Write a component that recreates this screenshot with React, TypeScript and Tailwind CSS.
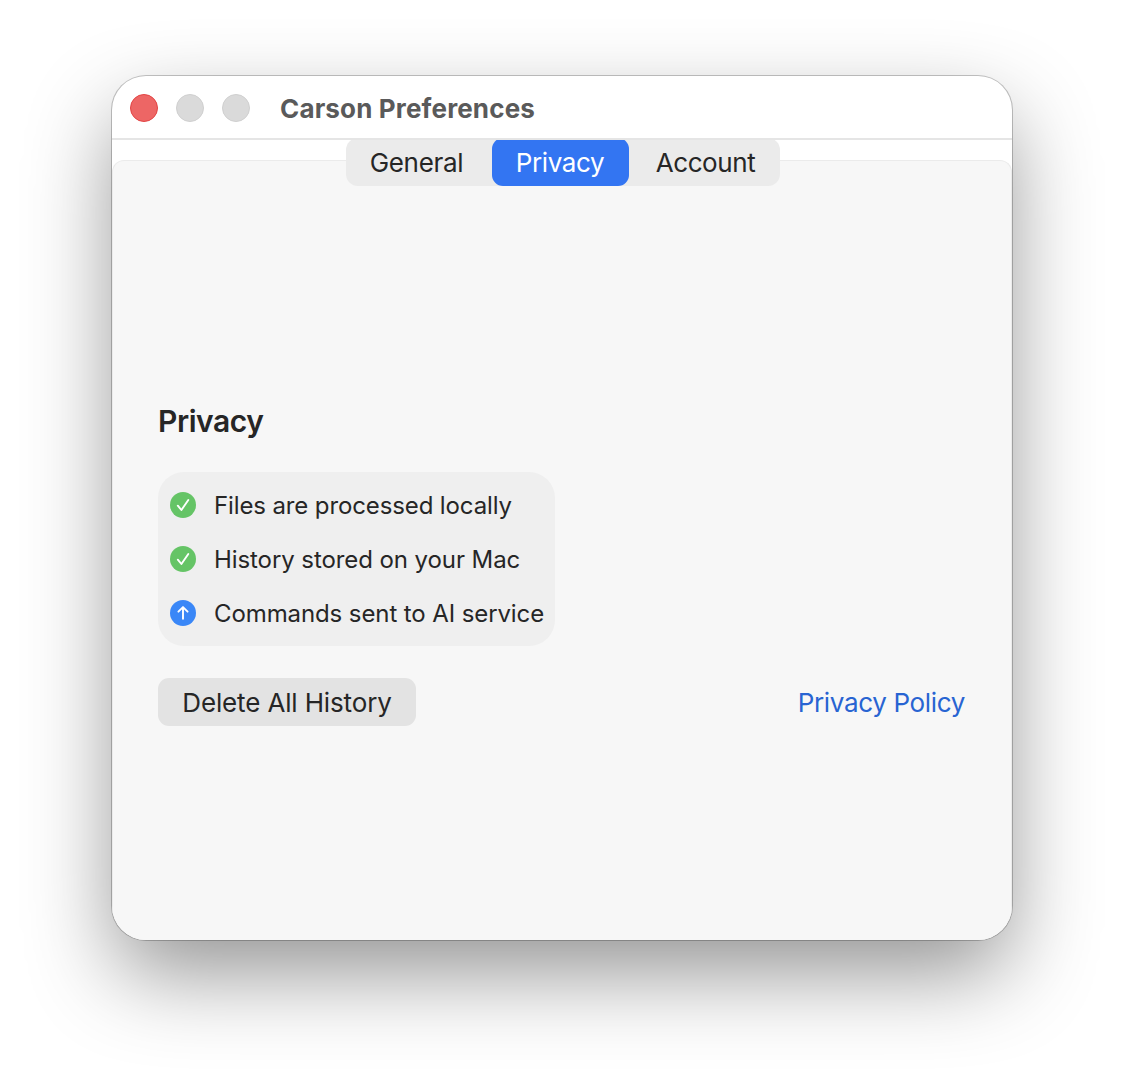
import type { ReactNode } from "react";

function Badge({ color, children }: { color: string; children: ReactNode }) {
  return (
    <svg viewBox="0 0 26 26" className="size-[26px] shrink-0" fill="none" stroke="white" strokeWidth="1.9" strokeLinecap="round" strokeLinejoin="round">
      <circle cx="13" cy="13" r="13" fill={color} stroke="none" />
      {children}
    </svg>
  );
}

const check = (
  <Badge color="#65c466">
    <path d="M7.8 13.7 11.4 18 18.3 8" />
  </Badge>
);

const arrow = (
  <Badge color="#3a87f7">
    <path d="M13 18.7V7.4M8.4 11.7 13 7.1l4.6 4.6" />
  </Badge>
);

const rows = [
  { icon: check, text: "Files are processed locally", style: "tracking-[-0.12px]" },
  { icon: check, text: "History stored on your Mac", style: "tracking-[-0.08px]" },
  { icon: arrow, text: "Commands sent to AI service", style: "tracking-[-0.1px]" },
];

export default function App() {
  return (
    <main className="h-[1088px] w-[1124px] overflow-hidden bg-white px-28 pt-19 font-['Inter',sans-serif] text-[#262626]">
      <section className="flex h-[864px] w-[900px] flex-col overflow-hidden rounded-[34px] bg-white shadow-[0_0_0_1px_rgba(0,0,0,0.22),0_36px_88px_-4px_rgba(0,0,0,0.43)]">
        <header className="flex h-16 shrink-0 items-center border-b-2 border-[#e5e5e5] pl-[18px]">
          <div className="mt-0.5 flex gap-[18px]">
            <span className="size-7 rounded-full border border-[#e24444] bg-[#ed6665]" />
            <span className="size-7 rounded-full border border-[#cfcfcf] bg-[#dadada]" />
            <span className="size-7 rounded-full border border-[#cfcfcf] bg-[#dadada]" />
          </div>
          <h1 className="ml-[30px] mt-1 whitespace-nowrap text-[26px] leading-8 font-bold tracking-[0.15px] text-[#5a5a5a]">Carson Preferences</h1>
        </header>
        <div className="flex grow flex-col pt-5">
          <div className="flex grow flex-col rounded-t-xl border border-b-0 border-[#ebebeb] bg-[#f7f7f7]">
            <nav className="-mt-[23px] ml-[233px] flex h-12 w-[434px] rounded-xl bg-[#ebebeb] text-[26px] [clip-path:inset(2px_0_0_0)]">
              <button className="w-[146px] pr-[5px] text-center"><span className="tracking-[-0.3px]">General</span></button>
              <button className="w-[137px] rounded-[11px] bg-[#3375f2] pr-px text-center text-white"><span className="tracking-[-0.4px]">Privacy</span></button>
              <button className="w-[151px] pl-[2px] text-center"><span className="tracking-[-0.4px]">Account</span></button>
            </nav>
            <div className="mt-[214px] flex flex-col items-start px-[45px]">
              <h2 className="-mt-px text-[30px] leading-[44px] font-semibold tracking-[-0.45px]">Privacy</h2>
              <ul className="mt-[29px] flex h-[174px] w-[397px] flex-col gap-[22px] rounded-[26px] bg-[#efefef] pt-[17px] pl-3">
                {rows.map((r) => (
                  <li key={r.text} className="flex h-8 items-center gap-[18px] whitespace-nowrap text-[24px]">
                    {r.icon}
                    <span className={`mt-0.5 ${r.style}`}>{r.text}</span>
                  </li>
                ))}
              </ul>
              <div className="mt-8 flex w-full items-center justify-between text-[26px]">
                <button className="h-12 w-[258px] rounded-[11px] bg-[#e3e3e3]"><span className="tracking-[-0.14px]">Delete All History</span></button>
                <a className="mr-px tracking-[-0.34px] text-[#2864d2]">Privacy Policy</a>
              </div>
            </div>
          </div>
        </div>
      </section>
    </main>
  );
}
